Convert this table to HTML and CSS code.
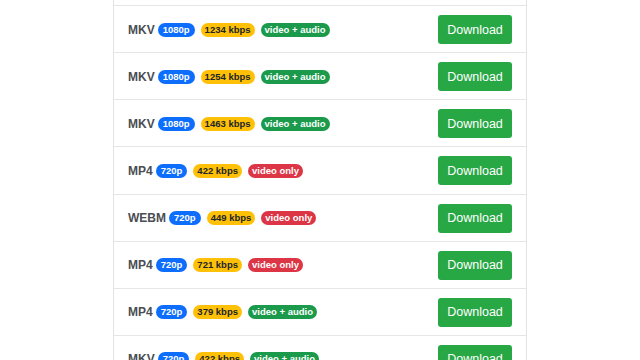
FILE: index.html
```html
<!DOCTYPE html>
<html>
<head>
<meta charset="utf-8">
<link rel="stylesheet" href="styles.css">
</head>
<body>
<div class="list">
  <div class="item">
    <div class="info"><span class="fmt">MKV</span><span class="badge blue">1080p</span><span class="badge yellow">1234 kbps</span><span class="badge green">video + audio</span></div>
    <button class="btn">Download</button>
  </div>
  <div class="item">
    <div class="info"><span class="fmt">MKV</span><span class="badge blue">1080p</span><span class="badge yellow">1254 kbps</span><span class="badge green">video + audio</span></div>
    <button class="btn">Download</button>
  </div>
  <div class="item">
    <div class="info"><span class="fmt">MKV</span><span class="badge blue">1080p</span><span class="badge yellow">1463 kbps</span><span class="badge green">video + audio</span></div>
    <button class="btn">Download</button>
  </div>
  <div class="item">
    <div class="info"><span class="fmt">MP4</span><span class="badge blue">720p</span><span class="badge yellow">422 kbps</span><span class="badge red">video only</span></div>
    <button class="btn">Download</button>
  </div>
  <div class="item">
    <div class="info"><span class="fmt">WEBM</span><span class="badge blue">720p</span><span class="badge yellow">449 kbps</span><span class="badge red">video only</span></div>
    <button class="btn">Download</button>
  </div>
  <div class="item">
    <div class="info"><span class="fmt">MP4</span><span class="badge blue">720p</span><span class="badge yellow">721 kbps</span><span class="badge red">video only</span></div>
    <button class="btn">Download</button>
  </div>
  <div class="item">
    <div class="info"><span class="fmt">MP4</span><span class="badge blue">720p</span><span class="badge yellow">379 kbps</span><span class="badge green">video + audio</span></div>
    <button class="btn">Download</button>
  </div>
  <div class="item">
    <div class="info"><span class="fmt">MKV</span><span class="badge blue">720p</span><span class="badge yellow">422 kbps</span><span class="badge green">video + audio</span></div>
    <button class="btn">Download</button>
  </div>
</div>
</body>
</html>
```
FILE: styles.css
```css
html, body {
  margin: 0;
  padding: 0;
  background: #ffffff;
  overflow: hidden;
  font-family: "Liberation Sans", Arial, sans-serif;
}
.list {
  width: 414px;
  margin: 0 auto;
  padding-top: 5px;
  box-sizing: border-box;
  border-left: 1px solid #e3e3e3;
  border-right: 1px solid #e3e3e3;
}
.item {
  display: flex;
  align-items: center;
  justify-content: space-between;
  height: 47.14px;
  box-sizing: border-box;
  padding: 0 14px 0 14px;
  border-top: 1px solid #e6e6e6;
}
.info {
  display: flex;
  align-items: center;
  margin-top: 1px;
}
.fmt {
  font-size: 12px;
  font-weight: bold;
  color: #4a4d52;
  margin-right: 3px;
}
.badge {
  display: inline-block;
  font-size: 9.5px;
  font-weight: bold;
  line-height: 14px;
  height: 14px;
  padding: 0 4px;
  border-radius: 7px;
  color: #ffffff;
  margin-right: 6px;
}
.blue { background: #0d6efd; padding: 0 5px; }
.yellow { background: #ffc107; color: #212529; }
.green { background: #1c9a4c; }
.red { background: #dc3545; }
.btn {
  font-family: "Liberation Sans", Arial, sans-serif;
  font-size: 12.5px;
  color: #ffffff;
  background: #28a745;
  border: none;
  border-radius: 3px;
  width: 74px;
  height: 29px;
  padding: 0;
  margin-top: 1px;
}
```
